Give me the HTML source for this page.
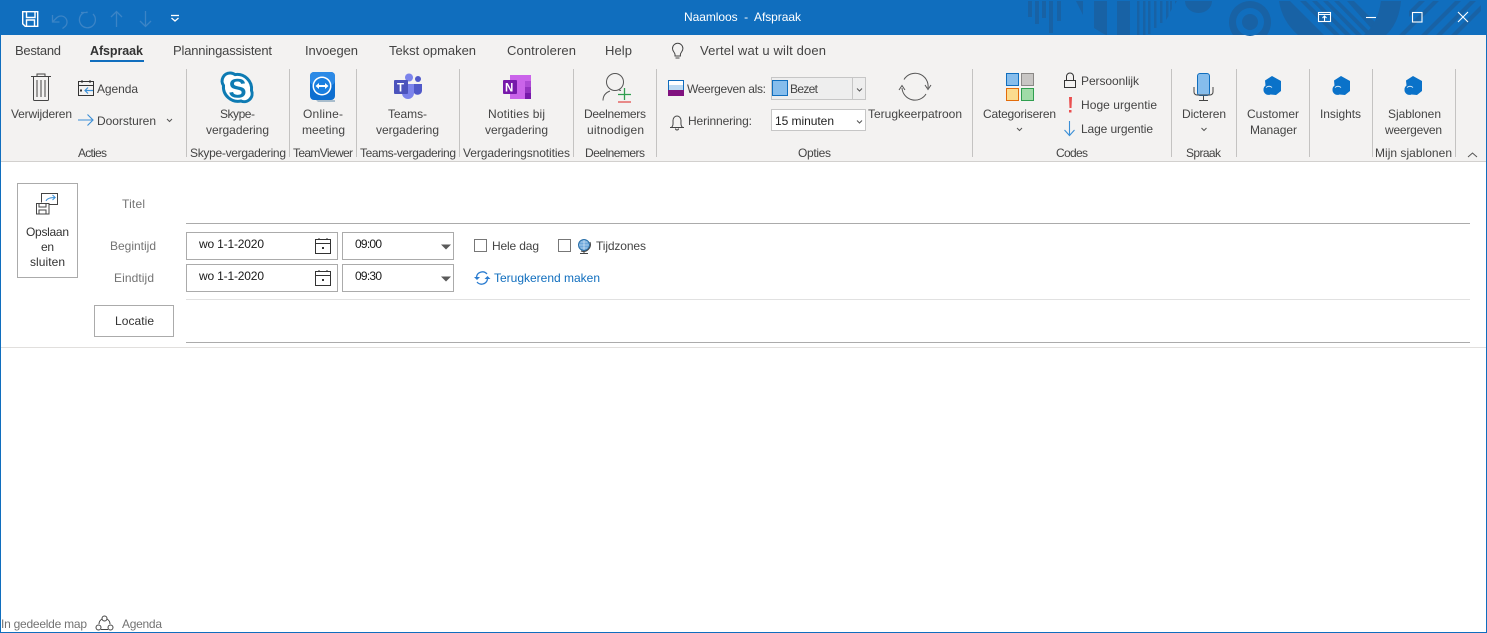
<!DOCTYPE html>
<html lang="nl"><head><meta charset="utf-8"><title>Naamloos - Afspraak</title>
<style>
html,body{margin:0;padding:0;background:#fff;width:1487px;height:633px;overflow:hidden}
svg{display:block;position:absolute;left:0;top:0}
text{font-family:"Liberation Sans",sans-serif;font-size:12px;fill:#444}
.t{font-size:13px}
.g{fill:#737373}.w{fill:#fff}.d{fill:#1a1a1a}.b{fill:#106ebe}
.ic{fill:none;stroke:#444;stroke-width:1}
.tb{fill:none;stroke:#3b84c6;stroke-width:1.300}
.pt{fill:#1862a5}
.sep{stroke:#c4c3c2;stroke-width:1}
.box{fill:#fff;stroke:#ababab;stroke-width:1}
.ch{fill:none;stroke:#555;stroke-width:1}
</style></head><body>
<svg width="1487" height="633" viewBox="0 0 1487 633" xmlns="http://www.w3.org/2000/svg">
<rect width="1487" height="633" fill="#fff"/>
<rect width="1487" height="35" fill="#106ebe"/>
<rect y="35" width="1487" height="126" fill="#f3f2f1"/>
<rect y="161" width="1487" height="1" fill="#d2d0ce"/>
<rect y="0" width="1" height="633" fill="#106ebe"/><rect x="1486" y="0" width="1" height="633" fill="#106ebe"/><rect y="632" width="1487" height="1" fill="#106ebe"/>

<!-- title pattern -->
<g class="pt">
<rect x="1028" y="1" width="4" height="16"/><rect x="1035" y="1" width="4" height="23"/><rect x="1042" y="1" width="4" height="17"/><rect x="1049" y="1" width="4" height="32"/><rect x="1057" y="1" width="4" height="20"/>
<path d="M1076 1h7v14z"/><path d="M1094 1h13v34h-1q-4-2-12-7z"/><rect x="1117" y="1" width="13" height="34"/>
<path d="M1137 1h2.500v34h-2.500zM1143 1h2.500v34h-2.500zM1148 1h2.500v33h-2.500zM1154 1h2.500v27h-2.500zM1160 1h2.500v22h-2.500zM1166 1h2.500v15l-2.500 4zM1170 1h2v8l-2 3zM1175 1h2l-2 3z"/>
<path d="M1185 1h27a13.500 12 0 0 1-27 0z"/>
<path d="M1250 1a21 21 0 0 0-21 21c0 5 1.500 9 4 13h34c2.500-4 4-8 4-13a21 21 0 0 0-21-21zm0 7a14 14 0 1 1 0 28a14 14 0 1 1 0-28z" fill-rule="evenodd"/>
<circle cx="1250" cy="22" r="8"/>
<path d="M1279 1h11l34 34h-26q-16-14-19-34z"/>
<path d="M1300 1h6l34 34h-6zM1312 1h5l34 34h-6zM1323 1h5l34 34h-6zM1334 1h5l30 30v4h-2z"/>
<path d="M1347 1h7l28 28-3 6h-2z"/>
<path d="M1381 1h20q-2 22-15 34h-22q14-12 17-34z"/>
<path d="M1409 11l10-10h6l-16 16zM1409 25l24-24h6l-34 34h-6l10-10zM1421 35l34-34h6l-34 34zM1436 35l34-34h6l-34 34zM1451 35l30-30v6l-24 24z"/>
</g>

<!-- QAT -->
<g fill="none" stroke="#fff" stroke-width="1.400"><path d="M22.700 11.700h15v14.600h-12.500l-2.500-2.500z"/><path d="M26.500 11.700v5.800h8.500v-5.800M26.500 26.300v-6.300h8v6.300"/></g>
<g class="tb"><path d="M52.500 15v7h7"/><path d="M52.500 22l4.500-4.500a6 6 0 0 1 8 9l-2.500 2"/><path d="M84 12.500a8 8 0 1 0 9 1.500"/><path d="M81 12.500h6v-1"/><path d="M116.500 27V11.500M111 17l5.500-5.500 5.500 5.500M145.500 11v15.500M140 21l5.500 5.500 5.500-5.500"/></g>
<path d="M171 15.500h8" stroke="#fff" stroke-width="1.300"/><path d="M171.500 18l3.500 3 3.500-3" fill="none" stroke="#fff" stroke-width="1.300"/>
<text class="w" x="684" y="21" textLength="117" xml:space="preserve">Naamloos  -  Afspraak</text>

<!-- window controls -->
<g fill="none" stroke="#fff" stroke-width="1.100">
<rect x="1318.500" y="12.500" width="12" height="9"/><path d="M1318.500 14.500h12M1324.500 21v-5M1322.500 18l2-2 2 2"/>
<path d="M1366 17.500h10"/><rect x="1412.500" y="12.500" width="9.500" height="9.500"/><path d="M1458 12l10 10M1468 12l-10 10"/></g>

<!-- tabs -->
<text class="t" x="15" y="55" textLength="46">Bestand</text>
<text x="90" y="55" textLength="53" style="font-weight:700;font-size:12.500px;fill:#333">Afspraak</text>
<rect x="90" y="60" width="54" height="2" fill="#106ebe"/>
<text class="t" x="173" y="55" textLength="99">Planningassistent</text>
<text class="t" x="305" y="55" textLength="53">Invoegen</text>
<text class="t" x="389" y="55" textLength="87">Tekst opmaken</text>
<text class="t" x="507" y="55" textLength="69">Controleren</text>
<text class="t" x="605" y="55" textLength="27">Help</text>
<path class="ic" d="M675 56v-1.500c0-2-2.500-3-2.500-6a5.200 5.200 0 0 1 10.400 0c0 3-2.500 4-2.500 6v1.500zM675.500 58h4"/>
<text class="t" x="700" y="55" textLength="126">Vertel wat u wilt doen</text>

<!-- separators -->
<g class="sep"><path d="M186.500 69v88M289.500 69v88M356.500 69v88M459.500 69v88M573.500 69v88M656.500 69v88M972.500 69v88M1171.500 69v88M1236.500 69v88M1309.500 69v88M1372.500 69v88M1455.500 69v88"/></g>

<!-- Acties -->
<path fill="none" stroke="#444" stroke-width="1" d="M31 76.500h20M37 76.500v-2.500h8v2.500M33.500 76.500v23a1 1 0 0 0 1 1h13a1 1 0 0 0 1-1v-23M37 80v17M41 80v17M45 80v17"/>
<text x="11" y="118" textLength="61">Verwijderen</text>
<g fill="none" stroke="#333" stroke-width="1"><rect x="78.500" y="81.500" width="15" height="14"/><path d="M78.500 85.500h15M82 80v3M90 80v3"/></g>
<path d="M93 90.500h-8M88 87.500l-3 3 3 3" fill="none" stroke="#3b8fd6" stroke-width="1.200"/><rect x="80" y="89.500" width="2" height="2" fill="#333"/>
<text x="97" y="93" textLength="41">Agenda</text>
<path d="M78 120h14M87.500 114.500l5.500 5.500-5.500 5.500" fill="none" stroke="#3b8fd6" stroke-width="1.100"/>
<text x="97" y="125" textLength="59">Doorsturen</text>
<path class="ch" d="M167 119l2.500 2.500 2.500-2.500"/>
<text x="78" y="157" textLength="29">Acties</text>

<!-- Skype -->
<path d="M230 73a8 8 0 0 1 5 1.600 14.500 14.500 0 0 1 16.500 15.900 8 8 0 0 1-10.500 10.500 14.500 14.500 0 0 1-17.500-15.500 8 8 0 0 1 6.500-12.500z" fill="#fff" stroke="#0e7bb3" stroke-width="3"/>
<text x="228.500" y="97.500" style="font-size:27px;font-weight:700;fill:#0e7bb3">S</text>
<text x="220" y="118" textLength="35">Skype-</text>
<text x="206" y="134" textLength="63">vergadering</text>
<text x="190" y="157" textLength="96">Skype-vergadering</text>

<!-- TeamViewer -->
<rect x="310" y="72" width="25" height="28" rx="4" fill="#0e6fd0"/><rect x="310" y="72" width="25" height="13" rx="4" fill="#2c8ae6"/>
<path d="M316 100h19v2h-17z" fill="#a9bdcc"/>
<circle cx="322" cy="86" r="9.500" fill="#fff"/><circle cx="322" cy="86" r="8" fill="#1a7fe0"/>
<path d="M315.500 86l3.500-3v2h6v-2l3.500 3-3.500 3v-2h-6v2z" fill="#fff"/>
<text x="303" y="118" textLength="40">Online-</text>
<text x="302" y="134" textLength="43">meeting</text>
<text x="293" y="157" textLength="60">TeamViewer</text>

<!-- Teams -->
<circle cx="409" cy="77.500" r="4" fill="#7b83eb"/><circle cx="418" cy="79" r="3" fill="#5059c9"/>
<path d="M414 84h8v7a4.500 4.500 0 0 1-8 2z" fill="#5059c9"/><path d="M402 84h12v9a6 6 0 0 1-12 0z" fill="#7b83eb"/>
<rect x="394" y="80" width="14" height="14" rx="1" fill="#4b53bc"/>
<text x="397" y="91.500" style="font-size:11.500px;font-weight:700;fill:#fff">T</text>
<text x="388" y="118" textLength="39">Teams-</text>
<text x="376" y="134" textLength="63">vergadering</text>
<text x="360" y="157" textLength="96">Teams-vergadering</text>

<!-- OneNote -->
<rect x="510" y="75" width="21" height="24" fill="#ca64ea"/><rect x="525" y="81" width="6" height="6" fill="#ae4bd5"/><rect x="525" y="87" width="6" height="6" fill="#9332bf"/><rect x="525" y="93" width="6" height="6" fill="#7719aa"/>
<rect x="503" y="80" width="14" height="14" rx="1" fill="#7719aa"/>
<text x="505" y="91.500" style="font-size:11.500px;font-weight:700;fill:#fff">N</text>
<text x="488" y="118" textLength="57">Notities bij</text>
<text x="485" y="134" textLength="63">vergadering</text>
<text x="463" y="157" textLength="107">Vergaderingsnotities</text>

<!-- Deelnemers -->
<g fill="none" stroke="#555" stroke-width="1"><circle cx="615" cy="82" r="8.500"/><path d="M603 100.500c0-5 3-8 7-9.500M619 90l2 .5"/></g>
<path d="M624.500 88v12M618 94.500h13" stroke="#2f9e4f" stroke-width="1.300"/><path d="M618 102h13" stroke="#e2504f" stroke-width="1.300"/>
<text x="584" y="118" textLength="62">Deelnemers</text>
<text x="587" y="134" textLength="57">uitnodigen</text>
<text x="585" y="157" textLength="60">Deelnemers</text>

<!-- Opties -->
<rect x="668.500" y="80.500" width="15" height="15" fill="#fff" stroke="#0f6cbd"/><rect x="669" y="85" width="14" height="5" fill="#bcd9f1"/><rect x="668" y="90" width="16" height="6" fill="#80127f"/>
<text x="687" y="93" textLength="79">Weergeven als:</text>
<path class="ic" d="M670 127.500h14M671.500 127.500c2-2 1.500-4 1.500-7a4 4.500 0 0 1 8 0c0 3-.5 5 1.500 7M675.500 128.500a1.500 1.500 0 0 0 3 0"/>
<text x="688" y="125" textLength="64">Herinnering:</text>
<rect x="771.500" y="77.500" width="94" height="22" fill="#eeeeee" stroke="#c6c6c6"/><path d="M852.500 78v21" stroke="#c6c6c6"/>
<rect x="772.500" y="80.500" width="15" height="15" fill="#86bdec" stroke="#106ebe"/>
<text x="790" y="93" textLength="28">Bezet</text>
<path class="ch" d="M857 88.500l2.500 2.500 2.500-2.500"/>
<rect x="771.500" y="109.500" width="94" height="21" fill="#fff" stroke="#c6c6c6"/>
<text x="775" y="125" textLength="59" style="fill:#222">15 minuten</text>
<path class="ch" d="M857 120.500l2.500 2.500 2.500-2.500"/>
<g fill="none" stroke="#555" stroke-width="1"><path d="M904 79.500a13 13 0 0 1 24 8.500"/><path d="M926 94a13 13 0 0 1-24-6"/><path d="M925 85l3 4.500 3-4.500M899 90l3-4.500 3 4.500"/></g>
<text x="868" y="118" textLength="94">Terugkeerpatroon</text>
<text x="798" y="157" textLength="33">Opties</text>

<!-- Codes -->
<rect x="1006.500" y="73.500" width="12" height="12" fill="#86bdec" stroke="#106ebe"/><rect x="1021.500" y="73.500" width="12" height="12" fill="#c8c6c4" stroke="#8a8886"/>
<rect x="1006.500" y="88.500" width="12" height="12" fill="#fbdc8e" stroke="#e36c0a"/><rect x="1021.500" y="88.500" width="12" height="12" fill="#a0dba7" stroke="#2f9e4f"/>
<text x="983" y="118" textLength="73">Categoriseren</text>
<path class="ch" d="M1017 128l2.500 2.500 2.500-2.500"/>
<g fill="none" stroke="#333"><rect x="1064.500" y="80.500" width="11" height="7"/><path d="M1066.500 80.500v-4a3.500 3.500 0 0 1 7 0v4"/></g>
<text x="1081" y="85" textLength="58">Persoonlijk</text>
<path d="M1069 97h3l-.5 11h-2zM1069 110h2.500v2.500h-2.500z" fill="#ea4f4f"/>
<text x="1081" y="109" textLength="76">Hoge urgentie</text>
<path d="M1069.500 121v14M1064.500 130l5 5.500 5-5.500" fill="none" stroke="#3b8fd6" stroke-width="1.100"/>
<text x="1081" y="133" textLength="72">Lage urgentie</text>
<text x="1056" y="157" textLength="32">Codes</text>

<!-- Dicteren -->
<rect x="1197.500" y="73.500" width="12" height="22" rx="2.500" fill="#86bdec" stroke="#106ebe"/>
<path d="M1194 87v5a3 3 0 0 0 3 3h13a3 3 0 0 0 3-3v-5M1203.500 96v4M1199 100.500h9" fill="none" stroke="#444"/>
<text x="1182" y="118" textLength="44">Dicteren</text>
<path class="ch" d="M1201.500 128l2.500 2.500 2.500-2.500"/>
<text x="1186" y="157" textLength="35">Spraak</text>

<!-- Blue add-in icons -->
<defs><g id="hx"><path d="M9 0l9 5v10l-5 4-5.500-.5a5 5 0 0 1-7-5 5 5 0 0 1 2-4l-.5-5z" fill="#0a72c9"/><path d="M3 11.500q3-2.500 6 0" fill="none" stroke="#dcebf7" stroke-width=".9"/></g></defs>
<use href="#hx" x="1263" y="76"/><use href="#hx" x="1332" y="76"/><use href="#hx" x="1404" y="76"/>
<text x="1247" y="118" textLength="52">Customer</text>
<text x="1250" y="134" textLength="47">Manager</text>
<text x="1320" y="118" textLength="41">Insights</text>
<text x="1388" y="118" textLength="53">Sjablonen</text>
<text x="1385" y="134" textLength="57">weergeven</text>
<text x="1375" y="157" textLength="77">Mijn sjablonen</text>
<path d="M1468 157l4.500-4 4.500 4" fill="none" stroke="#555"/>

<!-- Form -->
<rect class="box" x="17.500" y="183.500" width="60" height="94"/>
<g fill="none" stroke="#444"><path d="M41.500 202.500v-9h16v11h-8"/><path d="M36.500 203.500h12.500v10.500h-12.500z"/><path d="M39 203.500v3.500h7v-3.500M39 214v-4h7v4"/></g>
<path d="M46 201c1-2.500 4-3.500 9-3.500M52.500 195l2.700 2.500-2.700 2.500" fill="none" stroke="#3b8fd6"/>
<text x="26" y="236" textLength="43" style="fill:#333">Opslaan</text>
<text x="41" y="251" textLength="13" style="fill:#333">en</text>
<text x="30" y="266" textLength="35" style="fill:#333">sluiten</text>
<text class="g" x="122" y="208" textLength="23">Titel</text>
<rect x="186" y="223" width="1284" height="1" fill="#ababab"/>
<text class="g" x="110" y="250" textLength="46">Begintijd</text>
<text class="g" x="114" y="282" textLength="40">Eindtijd</text>
<rect class="box" x="186.500" y="232.500" width="151" height="27"/><rect class="box" x="186.500" y="264.500" width="151" height="27"/>
<text class="d" x="199" y="248" textLength="65">wo 1-1-2020</text>
<text class="d" x="199" y="280" textLength="65">wo 1-1-2020</text>
<g fill="none" stroke="#333"><rect x="315.500" y="239.500" width="15" height="14"/><path d="M315.500 243.500h15M319 238v2M327 238v2"/><rect x="315.500" y="271.500" width="15" height="14"/><path d="M315.500 275.500h15M319 270v2M327 270v2"/></g>
<rect x="322" y="247" width="2" height="2" fill="#333"/><rect x="322" y="279" width="2" height="2" fill="#333"/>
<rect class="box" x="342.500" y="232.500" width="111" height="27"/><rect class="box" x="342.500" y="264.500" width="111" height="27"/>
<text class="d" x="355" y="248" textLength="27">09:00</text>
<text class="d" x="355" y="280" textLength="27">09:30</text>
<path d="M441 244.500h10l-5 5zM441 276.500h10l-5 5z" fill="#5a5a5a"/>
<rect class="box" x="474.500" y="239.500" width="12" height="12" style="stroke:#777"/><rect class="box" x="558.500" y="239.500" width="12" height="12" style="stroke:#777"/>
<text x="492" y="250" textLength="47">Hele dag</text>
<circle cx="584" cy="245" r="5.500" fill="#6fa9dc" stroke="#2a6fa8"/><path d="M579 245h10M584 240v10M580.500 242h7M580.500 248h7" stroke="#e6f0f8" stroke-width=".6"/><path d="M590 242a7 7 0 0 1-9 9M584 252v1.500M580 253.500h8" fill="none" stroke="#444"/>
<text x="596" y="250" textLength="50">Tijdzones</text>
<g fill="none" stroke="#2b7cd0" stroke-width="1.300"><path d="M476.500 277a6 6 0 0 1 10.500-3M487.500 279a6 6 0 0 1-10.500 3"/></g><path d="M474 277h6l-3 3zM484.500 279h6l-3-3z" fill="#2b7cd0"/>
<text class="b" x="494" y="282" textLength="106">Terugkerend maken</text>
<rect x="186" y="299" width="1284" height="1" fill="#e1e1e1"/>
<rect class="box" x="94.500" y="305.500" width="79" height="31"/>
<text x="115" y="325" textLength="39" style="fill:#333">Locatie</text>
<rect x="186" y="342" width="1284" height="1" fill="#ababab"/>
<rect x="1" y="347" width="1485" height="1" fill="#e1dfdd"/>

<!-- Footer -->
<text class="g" x="1" y="628" textLength="86">In gedeelde map</text>
<g fill="none" stroke="#444"><path d="M99 624a6 6 0 0 1 3-5M107 619a6 6 0 0 1 3 5M101 629.500h7"/><circle cx="104.500" cy="618.500" r="2.500"/><circle cx="98.500" cy="627.500" r="2.500"/><circle cx="110.500" cy="627.500" r="2.500"/></g>
<text class="g" x="122" y="628" textLength="40">Agenda</text>
</svg>
</body></html>
